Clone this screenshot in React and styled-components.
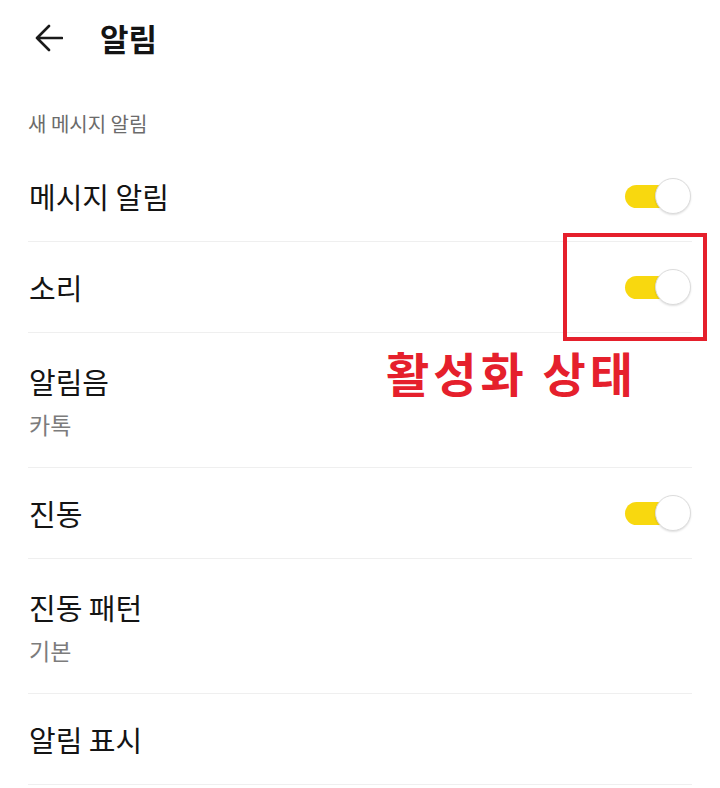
import React, { useState } from 'react';
import styled, { createGlobalStyle } from 'styled-components';

const GlobalStyle = createGlobalStyle`
  body {
    margin: 0;
    background: #ffffff;
    font-family: "Noto Sans CJK KR", "Noto Sans", sans-serif;
    color: #141414;
  }
`;

// settings rows
const initialRows = [
  { id: 'msg', label: '메시지 알림', toggle: true },
  { id: 'sound', label: '소리', toggle: true },
  { id: 'tone', label: '알림음', sub: '카톡' },
  { id: 'vib', label: '진동', toggle: true },
  { id: 'pattern', label: '진동 패턴', sub: '기본' },
  { id: 'display', label: '알림 표시' }
];

function App() {
  const [on, setOn] = useState({ msg: true, sound: true, vib: true });

  return (
    <Page>
      <GlobalStyle />
      <Header>
        <BackButton aria-label='뒤로'>
          <svg width='28' height='28' viewBox='0 0 28 28' fill='none'>
            <path
              d='M27 14H2M14 2L2 14l12 12'
              stroke='#1a1a1a'
              strokeWidth='2.6'
              strokeLinecap='round'
              strokeLinejoin='round'
            />
          </svg>
        </BackButton>
        <Title>알림</Title>
      </Header>

      <Section>
        <SectionLabel>새 메시지 알림</SectionLabel>
        <List>
          {initialRows.map(row => (
            <Row key={row.id} $tall={!!row.sub}>
              <Texts>
                <Label>{row.label}</Label>
                {row.sub && <Sub>{row.sub}</Sub>}
              </Texts>
              {row.toggle && (
                <Switch
                  $on={on[row.id]}
                  onClick={() => setOn(s => ({ ...s, [row.id]: !s[row.id] }))}
                >
                  <Track $on={on[row.id]} />
                  <Knob $on={on[row.id]} />
                </Switch>
              )}
            </Row>
          ))}
        </List>
      </Section>

      {/* annotation over the screenshot */}
      <Highlight />
      <Note>활성화 상태</Note>
    </Page>
  );
}

export default App;

const Page = styled.div`
  position: relative;
  width: 720px;
  height: 788px;
  overflow: hidden;
  background: #fff;
`;

const Header = styled.div`
  display: flex;
  align-items: center;
  height: 76px;
  padding-left: 35px;
  gap: 37px;
`;

const BackButton = styled.div`
  display: flex;
  width: 28px;
  height: 28px;
`;

const Title = styled.h1`
  margin: 0;
  font-size: 31px;
  font-weight: 700;
  line-height: 40px;
  color: #141414;
`;

const Section = styled.div`
  padding: 0 28px;
`;

const SectionLabel = styled.div`
  margin-top: 34px;
  margin-bottom: 13px;
  font-size: 20px;
  line-height: 28px;
  color: #6b6b6b;
`;

const List = styled.div`
  display: flex;
  flex-direction: column;
`;

const Row = styled.div`
  display: flex;
  align-items: center;
  justify-content: space-between;
  box-sizing: border-box;
  border-bottom: 1px solid #efefef;
  height: ${p => (p.$tall ? '135px' : '91px')};
`;

const Texts = styled.div`
  display: flex;
  flex-direction: column;
  gap: 7px;
  padding-left: 1px;
`;

const Label = styled.div`
  font-size: 29px;
  line-height: 40px;
  color: #141414;
`;

const Sub = styled.div`
  font-size: 23px;
  line-height: 32px;
  color: #7c7c7c;
`;

const Switch = styled.div`
  position: relative;
  width: 66px;
  height: 36px;
  margin-right: 1px;
  cursor: pointer;
`;

const Track = styled.div`
  position: absolute;
  left: 0;
  top: 7px;
  width: 56px;
  height: 23px;
  border-radius: 12px;
  background: ${p => (p.$on ? '#f8d80f' : '#d4d4d4')};
`;

const Knob = styled.div`
  position: absolute;
  top: 0;
  left: ${p => (p.$on ? '30px' : '0')};
  width: 36px;
  height: 36px;
  box-sizing: border-box;
  border-radius: 50%;
  background: #fff;
  border: 1px solid #dcdcdc;
  box-shadow: 0 1px 2px rgba(0, 0, 0, 0.12);
`;

const Highlight = styled.div`
  position: absolute;
  left: 563px;
  top: 233px;
  width: 144px;
  height: 108px;
  box-sizing: border-box;
  border: 4px solid #e5202c;
`;

const Note = styled.div`
  position: absolute;
  left: 386px;
  top: 346px;
  font-size: 47px;
  font-weight: 700;
  line-height: 52px;
  color: #e5202c;
  letter-spacing: 4px;
`;
